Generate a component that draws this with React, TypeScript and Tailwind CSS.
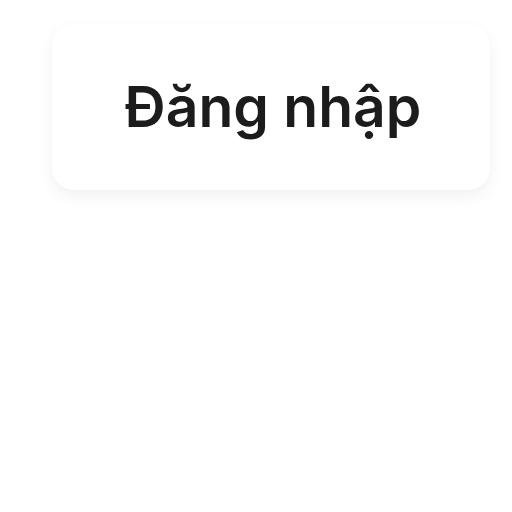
export default function App() {
  return (
    <div className="w-[512px] h-[512px] bg-white pt-[24px] pl-[52px]">
      <div className="w-[438px] h-[166px] rounded-[22px] bg-white shadow-[0_6px_16px_rgba(0,0,0,0.06)] flex items-center justify-center">
        <h1 className="font-['Inter',sans-serif] text-[57px] font-semibold text-[#1c1c1c] leading-none pl-[4px] pb-[2px]">
          Đăng nhập
        </h1>
      </div>
    </div>
  );
}
